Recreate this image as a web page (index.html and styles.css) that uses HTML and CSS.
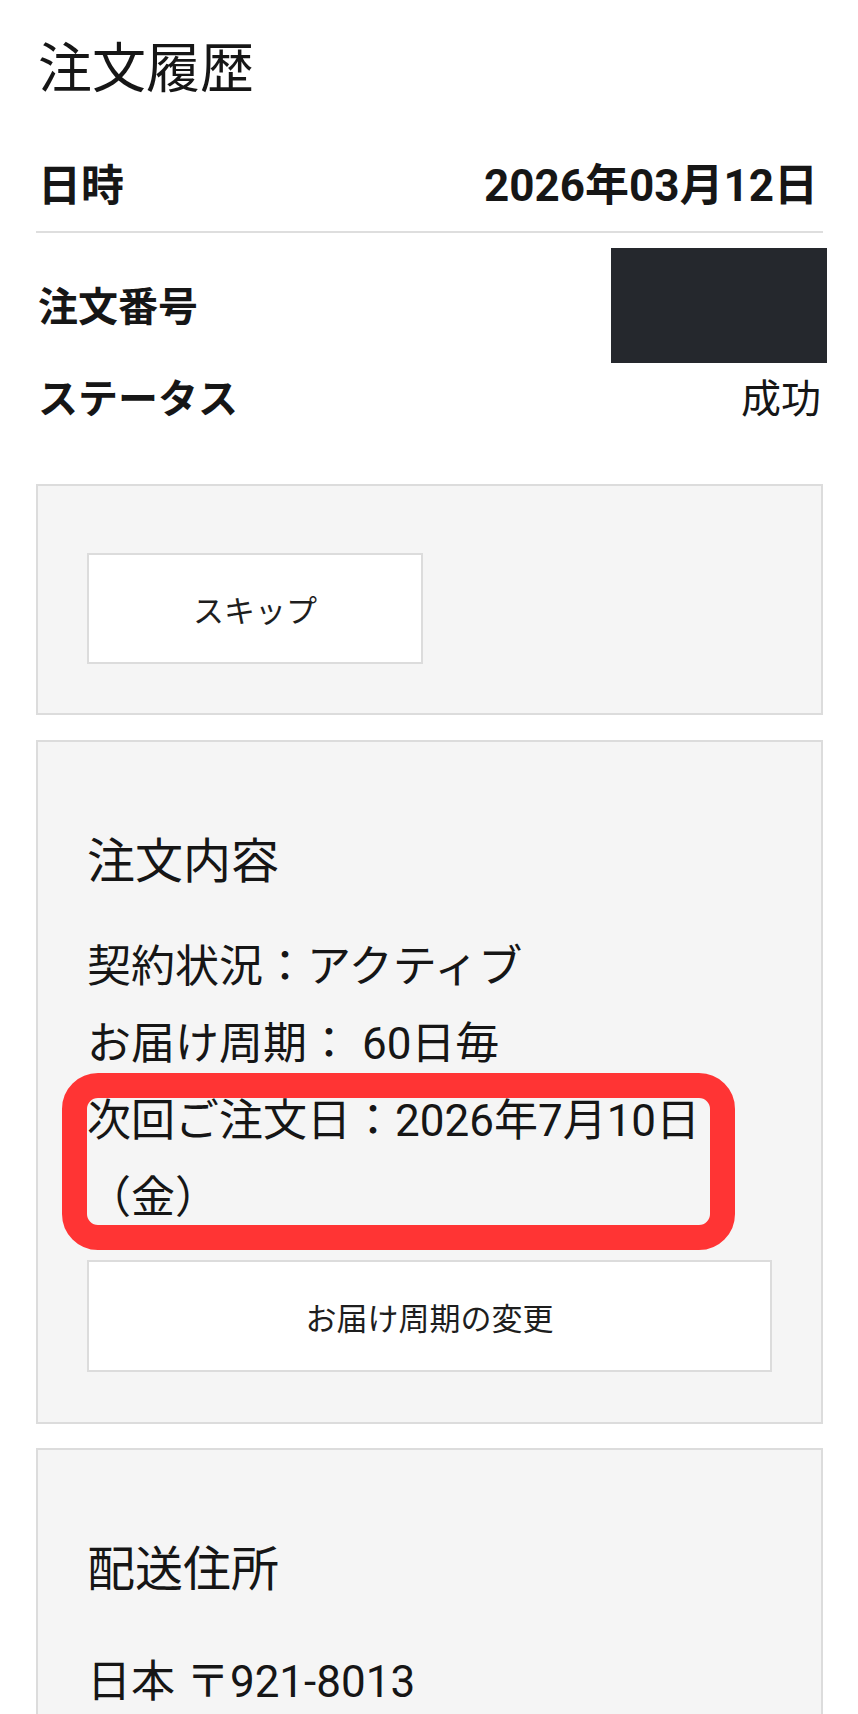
FILE: index.html
```html
<!DOCTYPE html>
<html lang="ja">
<head>
<meta charset="utf-8">
<title>注文履歴</title>
<link rel="stylesheet" href="styles.css">
</head>
<body>
<main class="page">
  <h1 class="page-title">注文履歴</h1>

  <div class="row row-date">
    <span class="label label-lg">日時</span>
    <span class="value-bold">2026年03月12日</span>
  </div>

  <div class="row row-order">
    <span class="label label-order">注文番号</span>
    <span class="redacted"></span>
  </div>

  <div class="row row-status">
    <span class="label">ステータス</span>
    <span class="value">成功</span>
  </div>

  <section class="card card-actions">
    <button class="btn btn-skip">スキップ</button>
  </section>

  <section class="card card-order">
    <h2 class="card-title">注文内容</h2>
    <div class="details">
      <p class="line">契約状況：アクティブ</p>
      <p class="line">お届け周期： 60日毎</p>
      <p class="line line-next">次回ご注文日：2026年7月10日（金）<span class="highlight"></span></p>
    </div>
    <button class="btn btn-wide">お届け周期の変更</button>
  </section>

  <section class="card card-address">
    <h2 class="card-title">配送住所</h2>
    <p class="line address">日本 〒921-8013</p>
  </section>
</main>
</body>
</html>
```

FILE: styles.css
```css
html, body {
  margin: 0;
  padding: 0;
  background: #ffffff;
}

body {
  font-family: Roboto, "Noto Sans CJK JP", sans-serif;
  color: #161616;
  height: 1714px;
  overflow: hidden;
}

.page {
  padding: 35px 35px 0 36px;
}

.page-title {
  margin: 0;
  font-size: 54px;
  font-weight: 400;
  line-height: 70px;
  padding-left: 2px;
}

.row {
  display: flex;
  justify-content: space-between;
  align-items: center;
}

.row-date {
  margin-top: 53px;
  line-height: 56px;
  padding: 0 0 17px 2px;
  border-bottom: 2px solid #dedede;
}

.label {
  font-size: 40px;
  font-weight: 700;
  line-height: 50px;
}

.label-lg {
  font-size: 43px;
  line-height: 56px;
}

.label-order {
  padding-top: 5px;
}

.value-bold {
  font-size: 44px;
  font-weight: 700;
  line-height: 56px;
  padding-right: 5px;
}

.row-order {
  margin-top: 15px;
  padding-left: 2px;
}

.redacted {
  display: block;
  width: 216px;
  height: 115px;
  background: #25282d;
  margin-right: -4px;
}

.row-status {
  margin-top: 12px;
  padding-left: 2px;
}

.value {
  font-size: 40px;
  line-height: 50px;
  padding-right: 2px;
}

.card {
  background: #f5f5f5;
  border: 2px solid #dcdcdc;
  padding: 0 49px;
}

.card-actions {
  margin-top: 59px;
  padding-top: 67px;
  padding-bottom: 49px;
}

.btn {
  display: block;
  background: #ffffff;
  border: 2px solid #dcdcdc;
  font-family: Roboto, "Noto Sans CJK JP", sans-serif;
  font-size: 31px;
  color: #1e1e1e;
  height: 111px;
  padding: 0;
  margin: 0;
  text-align: center;
}

.btn-skip {
  width: 336px;
}

.btn-wide {
  width: 100%;
  height: 112px;
  margin-top: 23px;
}

.card-order {
  margin-top: 25px;
  padding-top: 90px;
  padding-bottom: 50px;
}

.card-title {
  margin: 0;
  font-size: 48px;
  font-weight: 400;
  line-height: 60px;
}

.details {
  margin-top: 37px;
}

.line {
  margin: 0;
  font-size: 44px;
  line-height: 77px;
}

.line-next {
  position: relative;
}

.highlight {
  position: absolute;
  left: -25px;
  top: -10px;
  width: 673px;
  height: 177px;
  box-sizing: border-box;
  border: 25px solid #ff3434;
  border-radius: 36px;
  pointer-events: none;
}

.card-address {
  margin-top: 24px;
  padding-top: 90px;
  padding-bottom: 40px;
}

.address {
  margin-top: 44px;
}
```
